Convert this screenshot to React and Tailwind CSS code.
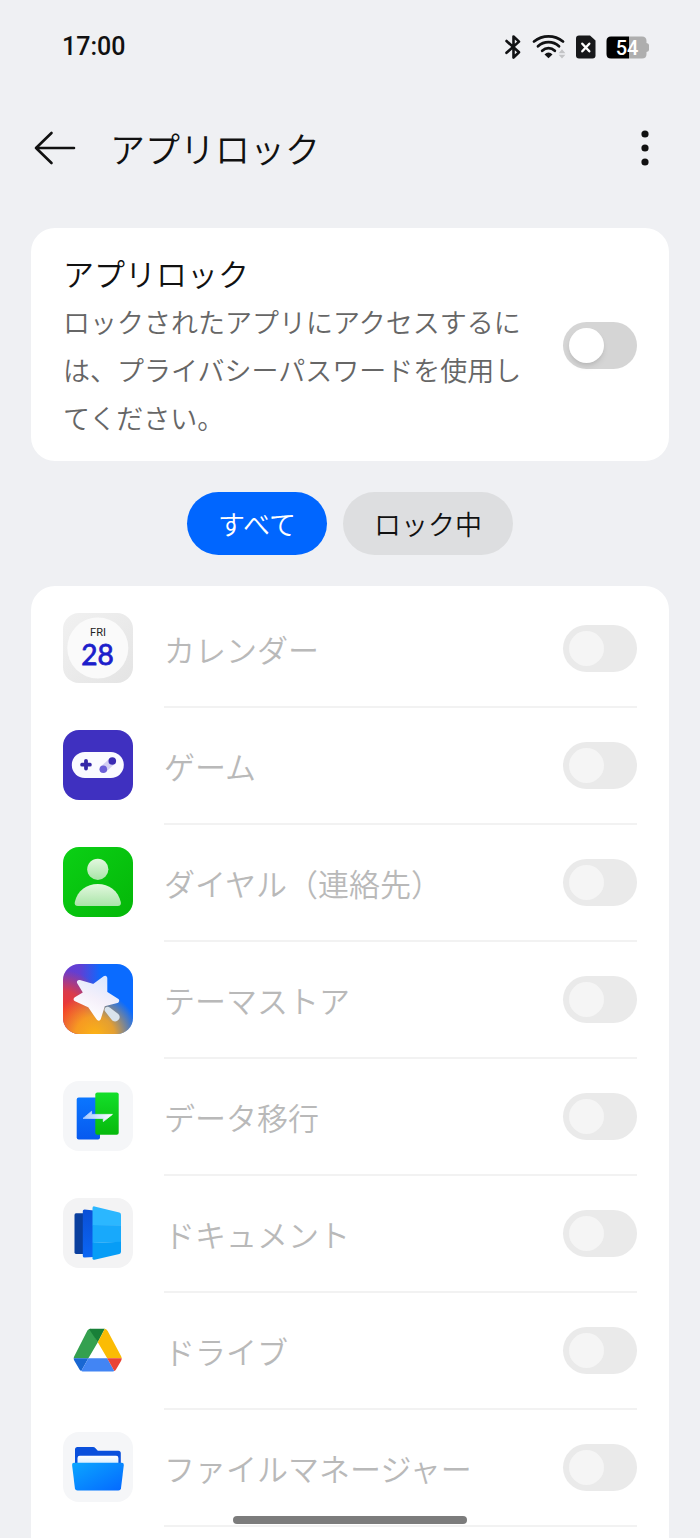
import { useState } from "react";

// Status bar icons
function BluetoothIcon() {
  return (
    <svg viewBox="0 0 18 26" className="h-[26px] w-[18px]" fill="none" stroke="#111214" strokeWidth="2.6" strokeLinecap="round" strokeLinejoin="round">
      <path d="M2.5 7 15 18.2 9.5 23.5V2.5L15 7.6 2.5 18.8" />
    </svg>
  );
}

function WifiIcon() {
  return (
    <svg viewBox="0 0 34 26" className="h-[26px] w-[34px]" fill="none">
      <g stroke="#111214" strokeWidth="2.8" strokeLinecap="round">
        <path d="M2 7.5Q8.5 2.4 16.5 2.4T31 7.5" />
        <path d="M6 12.3Q10.5 8.2 16.5 8.2T27 12.3" />
        <path d="M10.2 16.8Q13 14.2 16.5 14.2T22.8 16.8" />
      </g>
      <path d="M16.5 24.2 12.5 20.6Q14.3 18.5 16.5 18.5T20.5 20.6Z" fill="#111214" />
      <path d="M30 15.2 33.4 19.2H26.6ZM30 24.6 33.4 20.8H26.6Z" fill="#c3c4c6" />
    </svg>
  );
}

function SimIcon() {
  return (
    <svg viewBox="0 0 20 24" className="h-6 w-5">
      <path d="M3 .5H14L19.5 5.5V20.5Q19.5 23.5 16.5 23.5H3Q0 23.5 0 20.5V3.5Q0 .5 3 .5Z" fill="#17181a" />
      <path d="M6.3 8.7 13.3 16.3M13.3 8.7 6.3 16.3" stroke="#fff" strokeWidth="2.4" strokeLinecap="round" />
    </svg>
  );
}

function BatteryIcon() {
  return (
    <svg viewBox="0 0 43 23" className="h-[23px] w-[43px]">
      <path d="M23 .5H36Q40.5 .5 40.5 5V7Q43 7.5 43 9V14Q43 15.5 40.5 16V18Q40.5 22.5 36 22.5H23Z" fill="#aeaeae" />
      <path d="M23 .5H5Q.5 .5 .5 5V18Q.5 22.5 5 22.5H23Z" fill="#000" />
      <text x="21" y="18.5" textAnchor="middle" fontFamily="Roboto" fontSize="20" fontWeight="500" fill="#fff">54</text>
    </svg>
  );
}

// App icons, all on a 70 x 70 tile
function CalendarIcon() {
  return (
    <>
      <defs>
        <linearGradient id="cal" x1="0" y1="0" x2="1" y2="1">
          <stop stopColor="#f1f1f1" />
          <stop offset="1" stopColor="#e4e4e4" />
        </linearGradient>
      </defs>
      <rect width="70" height="70" rx="16" fill="url(#cal)" />
      <circle cx="34.8" cy="35" r="30.5" fill="#fafafa" />
      <text x="35" y="23.3" textAnchor="middle" fontFamily="Roboto" fontSize="11" fontWeight="400" fill="#222">FRI</text>
      <text x="34.5" y="52" textAnchor="middle" fontFamily="Lato" fontSize="28" fontWeight="400" fill="#1c1ecb" stroke="#1c1ecb" strokeWidth=".8">28</text>
    </>
  );
}

function GameIcon() {
  return (
    <>
      <rect width="70" height="70" rx="16" fill="#3f30c0" />
      <rect x="8.8" y="22" width="52" height="26" rx="13" fill="#fafaff" />
      <path d="M23 30.8V38.6M19.1 34.7H26.9" stroke="#3527a8" strokeWidth="3.8" strokeLinecap="round" />
      <path d="M40.3 39.3 49.3 31" stroke="#d3cff3" strokeWidth="7.4" />
      <circle cx="40.3" cy="39.3" r="3.8" fill="#6c5fd8" />
      <circle cx="49.3" cy="31" r="3.8" fill="#3a2bb3" />
    </>
  );
}

function ContactsIcon() {
  return (
    <>
      <defs>
        <linearGradient id="con" x1="0" y1="0" x2="1" y2="1">
          <stop stopColor="#0bd015" />
          <stop offset="1" stopColor="#04b708" />
        </linearGradient>
        <linearGradient id="conFg" x1="0" y1="0" x2="0" y2="1">
          <stop stopColor="#e3f8df" />
          <stop offset="1" stopColor="#a9e4a8" />
        </linearGradient>
      </defs>
      <rect width="70" height="70" rx="16" fill="url(#con)" />
      <circle cx="34.8" cy="22.3" r="10.6" fill="url(#conFg)" />
      <path d="M15 59Q11 59 11.8 55C14.5 43.5 23.5 37 34.8 37S55 43.5 57.8 55Q58.6 59 54.6 59Z" fill="url(#conFg)" />
    </>
  );
}

function ThemeIcon() {
  return (
    <>
      <defs>
        <linearGradient id="th" x1="0" y1="0" x2="1" y2="0">
          <stop stopColor="#6a3bd0" />
          <stop offset=".25" stopColor="#5f40d4" />
          <stop offset=".55" stopColor="#0a6bff" />
          <stop offset="1" stopColor="#0a6bff" />
        </linearGradient>
        <radialGradient id="thRed" gradientUnits="userSpaceOnUse" cx="0" cy="48" r="42">
          <stop stopColor="#f4372a" />
          <stop offset=".5" stopColor="#ee3a35" stopOpacity=".85" />
          <stop offset="1" stopColor="#ee3a35" stopOpacity="0" />
        </radialGradient>
        <radialGradient id="thGold" gradientUnits="userSpaceOnUse" cx="32" cy="72" r="44">
          <stop stopColor="#ffb412" />
          <stop offset=".45" stopColor="#fba41c" stopOpacity=".9" />
          <stop offset="1" stopColor="#fba41c" stopOpacity="0" />
        </radialGradient>
        <linearGradient id="thStar" x1=".8" y1="0" x2=".3" y2="1">
          <stop stopColor="#dbe7ff" />
          <stop offset=".55" stopColor="#f5f0fa" />
          <stop offset="1" stopColor="#fff" />
        </linearGradient>
      </defs>
      <rect width="70" height="70" rx="16" fill="url(#th)" />
      <rect width="70" height="70" rx="16" fill="url(#thRed)" />
      <rect width="70" height="70" rx="16" fill="url(#thGold)" />
      <path
        d="M16.3 18.3 30.8 22.4 42 14.2 42 29.2 53.8 36.7 40 40.3 35.6 54.3 26.6 41.3 13 35.2 23 29.2Z"
        fill="url(#thStar)"
        stroke="url(#thStar)"
        strokeWidth="4.6"
        strokeLinejoin="round"
      />
      <path d="M42.5 43.6Q44.6 41.8 46.7 43.4L55.3 49.9Q58 52.8 55.5 55.8T49.3 56.6L42.2 47.6Q40.8 45.3 42.5 43.6Z" fill="#d9e3ec" />
    </>
  );
}

function TransferIcon() {
  return (
    <>
      <defs>
        <linearGradient id="trB" x1="0" y1="0" x2="0" y2="1">
          <stop stopColor="#0a76ff" />
          <stop offset="1" stopColor="#0759ef" />
        </linearGradient>
        <linearGradient id="trG" x1="0" y1="0" x2="0" y2="1">
          <stop stopColor="#14df2a" />
          <stop offset="1" stopColor="#06b90c" />
        </linearGradient>
        <linearGradient id="trA" x1="0" y1="0" x2="1" y2="0">
          <stop stopColor="#a5c9ff" />
          <stop offset="1" stopColor="#fff" />
        </linearGradient>
      </defs>
      <rect width="70" height="70" rx="16" fill="#f5f6f8" />
      <rect x="13.7" y="16.5" width="23.3" height="42" rx="2" fill="url(#trB)" />
      <rect x="32.3" y="11.5" width="23.4" height="42.3" rx="2" fill="url(#trG)" />
      <path d="M20 37.4 28.6 30.3V33.4H49.4L40.3 40.6V37.4Z" fill="url(#trA)" stroke="url(#trA)" strokeWidth=".8" strokeLinejoin="round" />
    </>
  );
}

function DocsIcon() {
  return (
    <>
      <defs>
        <linearGradient id="docM" x1="0" y1="0" x2="0" y2="1">
          <stop stopColor="#0a4fd6" />
          <stop offset="1" stopColor="#0b66f4" />
        </linearGradient>
      </defs>
      <rect width="70" height="70" rx="16" fill="#f3f3f4" />
      <path d="M13 15.2H21V56H13Q11.5 56 11.5 54.3V17Q11.5 15.2 13 15.2Z" fill="#0a3f9e" />
      <path d="M21.5 11.4 31 12.5V59L21.5 59.6Q19.8 59.6 19.8 58V13Q19.8 11.4 21.5 11.4Z" fill="url(#docM)" />
      <path d="M31.5 8.4 56.3 14.5Q58 15 58 16.8V27.5L29.5 27.2V10Q29.6 8 31.5 8.4Z" fill="#2bb7ff" />
      <path d="M29.5 27 58 27.2V44L29.5 45Z" fill="#18a9fb" />
      <path d="M29.5 45 58 43.8V53.8Q58 55.5 56.3 56L31.5 61.8Q29.6 62.2 29.5 60.2Z" fill="#079df6" />
    </>
  );
}

function DriveIcon() {
  return (
    <>
      <path d="M27.7 13.7Q25.6 13.7 24.4 15.6L11.4 41Q10.7 42.2 10.7 43.2H25.4L34.8 27.3Z" fill="#34a04f" />
      <path d="M27.7 13.7H41.8L34.8 27.3 26 13.9Z" fill="#188038" />
      <path d="M41.8 13.7Q43.6 14.2 44.7 16L58 41Q58.7 42.2 58.7 43.2H44.2L34.8 27.3Z" fill="#fbbc04" />
      <path d="M10.7 43.2H25.4L18.3 56Q17.3 55.6 16.5 54.4L11.5 46Q10.7 44.7 10.7 43.2Z" fill="#1967d2" />
      <path d="M25.4 43.2H44.2L51.3 56Q50 56.6 48.8 56.6H20.8Q19.4 56.6 18.3 56Z" fill="#4285f4" />
      <path d="M44.2 43.2H58.7Q58.7 44.7 58 46L53 54.4Q52.3 55.6 51.3 56Z" fill="#ea4335" />
    </>
  );
}

function FilesIcon() {
  return (
    <>
      <defs>
        <linearGradient id="fi" x1="0" y1="0" x2="1" y2="1">
          <stop stopColor="#0ba6ff" />
          <stop offset="1" stopColor="#0468ff" />
        </linearGradient>
        <linearGradient id="fiP" x1="0" y1="0" x2="0" y2="1">
          <stop stopColor="#fff" />
          <stop offset="1" stopColor="#dcefff" />
        </linearGradient>
      </defs>
      <rect width="70" height="70" rx="16" fill="#f5f6f8" />
      <path d="M12 33V17.5Q12 15 14.5 15H30Q31.5 15 32.5 16.2L34.8 18.8H55.3Q57.8 18.8 57.8 21.3V33Z" fill="#0a50dc" />
      <path d="M14.5 31V26Q14.5 23.8 16.7 23.8H53.2Q55.4 23.8 55.4 26V31Z" fill="url(#fiP)" />
      <path d="M11 30.8H58.8Q61 30.8 60.8 33L58 56.3Q57.7 58.6 55.4 58.6H14.5Q12.2 58.6 11.9 56.3L9.1 33Q8.9 30.8 11 30.8Z" fill="url(#fi)" />
    </>
  );
}

const apps = [
  { name: "カレンダー", Icon: CalendarIcon },
  { name: "ゲーム", Icon: GameIcon },
  { name: "ダイヤル（連絡先）", Icon: ContactsIcon },
  { name: "テーマストア", Icon: ThemeIcon },
  { name: "データ移行", Icon: TransferIcon },
  { name: "ドキュメント", Icon: DocsIcon },
  { name: "ドライブ", Icon: DriveIcon },
  { name: "ファイルマネージャー", Icon: FilesIcon },
];

function Toggle({ id, ...props }) {
  return (
    <input
      id={id}
      type="checkbox"
      role="switch"
      className="flex h-[47px] w-[74px] shrink-0 appearance-none items-center rounded-full bg-[#d5d5d5] px-[6px] before:block before:size-[35px] before:rounded-full before:bg-white before:shadow-md before:content-[''] checked:justify-end checked:bg-[#0066ff] disabled:bg-[#eaeaea] disabled:before:bg-[#f5f5f5] disabled:before:shadow-none"
      {...props}
    />
  );
}

function AppRow({ name, Icon, index, locked }) {
  const id = `app-${index}`;
  return (
    <li className="flex h-[117px] items-center gap-[31px] pb-px">
      <svg viewBox="0 0 70 70" className="size-[70px] shrink-0" aria-hidden="true">
        <Icon />
      </svg>
      <div className="flex h-full flex-1 items-center justify-between gap-8 shadow-[0_2px_0_#f2f2f2]">
        <label htmlFor={id} className="pt-[3px] text-[31px] text-[#b9b9b9]">{name}</label>
        <Toggle id={id} disabled={!locked} />
      </div>
    </li>
  );
}

export default function App() {
  const [enabled, setEnabled] = useState(false);
  const [tab, setTab] = useState("all");

  return (
    <div lang="ja" className="min-h-screen bg-[#eff0f3] font-['Noto_Sans_CJK_JP',sans-serif] font-[350] text-[#111]">
      <div className="flex h-[94px] items-center justify-between pr-[51px] pl-[62px]">
        <span className="font-['Roboto',sans-serif] text-[25px] font-medium">17:00</span>
        <div className="flex items-center gap-[10px]">
          <BluetoothIcon />
          <WifiIcon />
          <SimIcon />
          <BatteryIcon />
        </div>
      </div>

      <header className="flex h-[108px] items-center pr-[50px] pl-[34px]">
        <button type="button" aria-label="戻る">
          <svg viewBox="0 0 42 34" className="h-[34px] w-[42px]" fill="none" stroke="#111" strokeWidth="2.6" strokeLinecap="round" strokeLinejoin="round">
            <path d="M40 17H2M17.5 2 2 17 17.5 32" />
          </svg>
        </button>
        <h1 className="ml-[34px] flex-1 text-[35px]">アプリロック</h1>
        <button type="button" aria-label="その他">
          <svg viewBox="0 0 10 36" className="h-9 w-[10px]" fill="#111">
            <circle cx="5" cy="4" r="3.6" />
            <circle cx="5" cy="18" r="3.6" />
            <circle cx="5" cy="32" r="3.6" />
          </svg>
        </button>
      </header>

      <main className="px-[31px] pt-[26px]">
        <section className="flex items-center justify-between gap-8 rounded-3xl bg-white px-8 pt-5 pb-[19px]">
          <div className="flex-1">
            <label htmlFor="app-lock" className="block text-[31px] leading-[50px]">アプリロック</label>
            <p className="text-[27px] leading-[48px] text-[#666]">
              ロックされたアプリにアクセスするには、プライバシーパスワードを使用してください。
            </p>
          </div>
          <Toggle id="app-lock" checked={enabled} onChange={(e) => setEnabled(e.target.checked)} />
        </section>

        <div className="my-[31px] flex justify-center gap-4 text-[27px]">
          <button
            type="button"
            onClick={() => setTab("all")}
            className={`h-[63px] rounded-full px-[31px] pt-[2px] ${tab === "all" ? "bg-[#0066ff] text-white" : "bg-[#dddee0]"}`}
          >
            すべて
          </button>
          <button
            type="button"
            onClick={() => setTab("locked")}
            className={`h-[63px] rounded-full px-[31px] pt-[2px] ${tab === "locked" ? "bg-[#0066ff] text-white" : "bg-[#dddee0]"}`}
          >
            ロック中
          </button>
        </div>

        <ul className="rounded-t-3xl bg-white px-8 pt-1 pb-3">
          {apps.map((app, i) => (
            <AppRow key={app.name} {...app} index={i} locked={enabled} />
          ))}
        </ul>
      </main>

      {/* Home indicator */}
      <div className="fixed inset-x-0 bottom-[14px] mx-auto h-2 w-1/3 rounded-full bg-[#7c7c7c]" />
    </div>
  );
}
